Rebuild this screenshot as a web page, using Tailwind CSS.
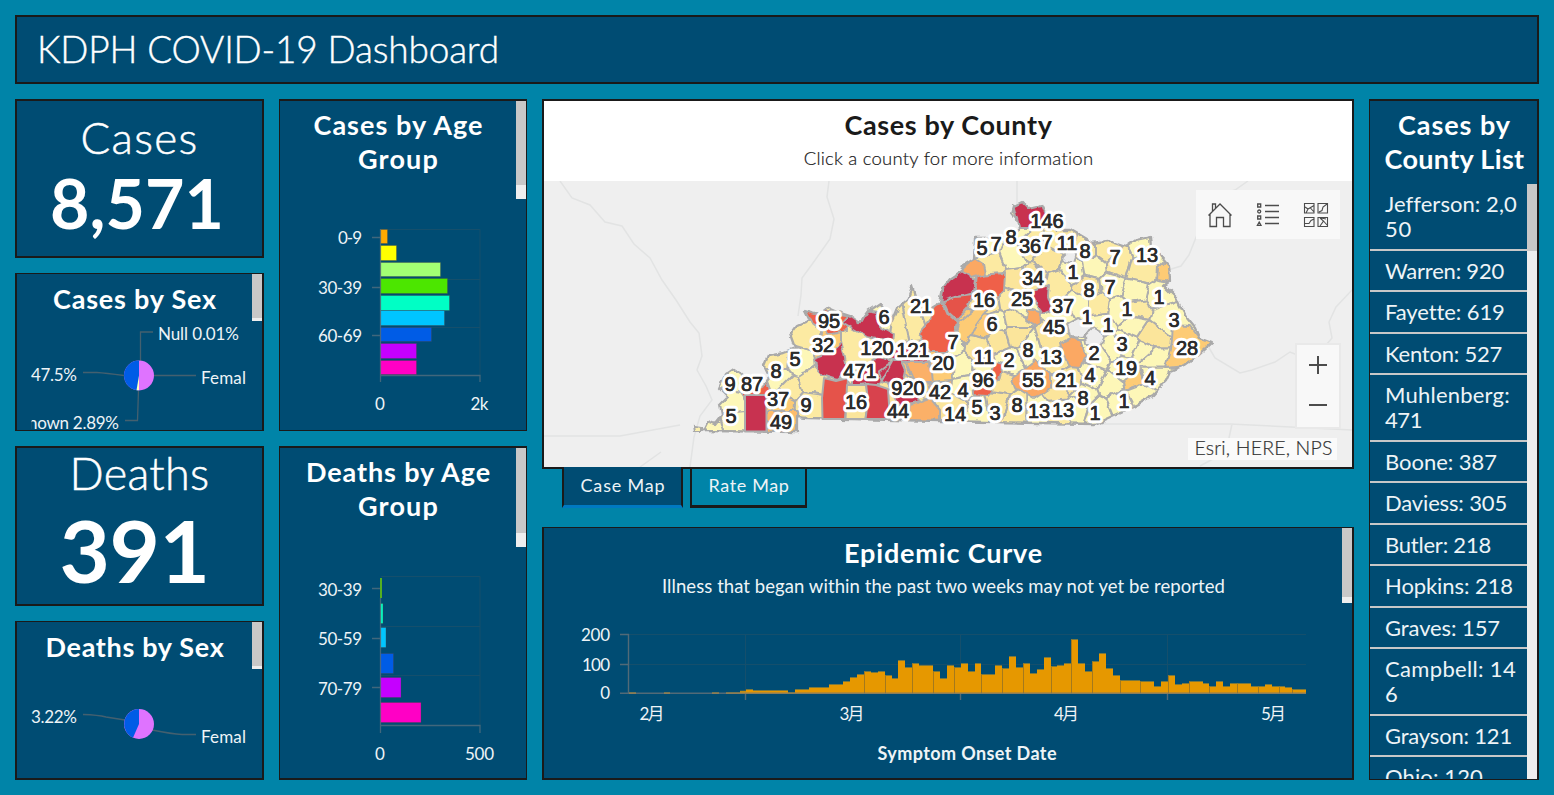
<!DOCTYPE html>
<html lang="en">
<head>
<meta charset="utf-8">
<title>KDPH COVID-19 Dashboard</title>
<script src="https://cdn.jsdelivr.net/npm/@tailwindcss/browser@4"></script>
</head>
<body class="bg-[#0084a8] text-white font-[Lato,'Noto_Sans_CJK_SC',sans-serif] overflow-hidden">
<div class="flex flex-col w-[1554px] h-[795px] p-[15px] gap-[15px]">
  <header class="h-[69px] shrink-0 bg-[#004c73] border-2 border-[#1a1a1a] flex items-center pl-[20px] pb-[3px]">
    <h1 class="text-[37px] font-light leading-none whitespace-nowrap [-webkit-text-stroke:0.4px]"><span data-w="460">KDPH COVID-19 Dashboard</span></h1>
  </header>

  <main class="flex gap-[15px] h-[681px]">
    <!-- totals and sex charts -->
    <div class="flex flex-col gap-[15px] w-[249px] shrink-0">
      <section class="h-[159px] bg-[#004c73] border-2 border-[#1a1a1a] flex flex-col items-center pt-[8px]">
        <div class="text-[44px] font-light leading-[56px] [-webkit-text-stroke:0.5px]"><span data-w="116">Cases</span></div>
        <div class="text-[68px] font-bold leading-[76px] pr-[5px]"><span data-w="172">8,571</span></div>
      </section>
      <section class="relative h-[158px] bg-[#004c73] border-x-2 border-y border-[#1a1a1a] flex flex-col overflow-hidden">
        <h2 class="h-[50px] text-[27px] font-bold leading-[50px] text-center pr-[9px]"><span data-w="162">Cases by Sex</span></h2>
        <svg class="w-[245px] h-[106px]" viewBox="17 324 245 106" font-size="17" fill="#eef4f7">
          <g fill="none" stroke="#44606f" stroke-width="1.3"><path d="M140.500 361V332H153M154 375.500H196M124 375.500Q105 373 97 372.500H83M138.500 390 137.500 420.500H125"/></g>
          <circle cx="139" cy="375.500" r="15" fill="#df73ff"/>
          <path d="M139 360.500A15 15 0 0 0 139 390.500Z" fill="#005ce6"/><path d="M139 375.500 136.500 390.300H139Z" fill="#ffffbe"/>
          <text x="158" y="340" textLength="81">Null 0.01%</text>
          <text x="31" y="381" textLength="46">47.5%</text>
          <text x="201" y="384" textLength="45">Femal</text>
          <svg x="31.500" y="410" width="100" height="20" viewBox="31.500 410 100 20"><text x="28" y="429" textLength="91">nown 2.89%</text></svg>
        </svg>
        <div class="absolute top-0 right-0 w-[10px] h-[47px] bg-[#c8c8c8] border-b-3 border-[#eee]"></div>
      </section>
      <section class="h-[160px] bg-[#004c73] border-2 border-[#1a1a1a] flex flex-col items-center">
        <div class="text-[45px] font-light leading-[51px] [-webkit-text-stroke:0.5px]"><span data-w="138">Deaths</span></div>
        <div class="text-[87px] font-bold leading-[101px] pr-[10px]"><span data-w="148">391</span></div>
      </section>
      <section class="relative h-[159px] bg-[#004c73] border-x-2 border-t border-b-2 border-[#1a1a1a] flex flex-col">
        <h2 class="h-[50px] text-[27px] font-bold leading-[50px] text-center pr-[9px]"><span data-w="177">Deaths by Sex</span></h2>
        <svg class="w-[245px] h-[106px]" viewBox="17 672 245 106" font-size="17" fill="#eef4f7">
          <path d="M83 714.500Q98 715 106 717L125 720M152 730Q172 734 182 734.500H196" fill="none" stroke="#44606f" stroke-width="1.300"/>
          <circle cx="139" cy="724" r="15" fill="#df73ff"/>
          <path d="M139 709A15 15 0 0 0 133 737.700L139 724Z" fill="#005ce6"/>
          <text x="31" y="723" textLength="46">3.22%</text>
          <text x="201" y="743" textLength="45">Femal</text>
        </svg>
        <div class="absolute top-0 right-0 w-[10px] h-[47px] bg-[#c8c8c8] border-b-3 border-[#eee]"></div>
      </section>
    </div>

    <!-- age group charts -->
    <div class="flex flex-col gap-[15px] w-[248px] shrink-0">
      <section class="relative h-[332px] bg-[#004c73] border-x border-t-2 border-b border-[#1a1a1a]">
        <h2 class="h-[80px] pt-[7px] text-[27px] font-bold leading-[34px] text-center pr-[9px]"><span data-w="168">Cases by Age</span><br><span data-w="79">Group</span></h2>
        <svg class="block w-[246px] h-[249px]" viewBox="280 181 246 249" font-size="17" fill="#eef4f7">
          <path d="M381 229.500H480V376M381 279.500H480M381 327.500H480" fill="none" stroke="#154f6c"/>
          <g stroke-opacity=".35" stroke="#444">
            <path fill="#ffaa00" d="M380.500 229.500h7v14h-7z"/><path fill="#ffff00" d="M380.500 245.500h16v15h-16z"/>
            <path fill="#a3ff73" d="M380.500 262.500h60v14h-60z"/><path fill="#4ce600" d="M380.500 278.500h67v15h-67z"/>
            <path fill="#00ffc5" d="M380.500 295.500h69v15h-69z"/><path fill="#00c5ff" d="M380.500 310.500h64v15h-64z"/>
            <path fill="#005ce6" d="M380.500 327.500h51v14h-51z"/><path fill="#c500ff" d="M380.500 343.500h36v15h-36z"/>
            <path fill="#ff00c5" d="M380.500 360.500h36v14h-36z"/>
          </g>
          <path d="M372 237.500h8M372 287.500h8M372 335.500h8M380.500 229v153M380 375.500h100V382" fill="none" stroke="#5d7480" stroke-opacity=".7" stroke-width="1.300"/>
          <g text-anchor="end"><text x="362" y="244" textLength="24">0-9</text><text x="362" y="294" textLength="44">30-39</text><text x="362" y="342" textLength="44">60-69</text></g>
          <g text-anchor="middle"><text x="380" y="410">0</text><text x="479.500" y="410" textLength="18">2k</text></g>
        </svg>
        <div class="absolute top-0 right-0 w-[10px] h-[98px] bg-[#c8c8c8] border-b-14 border-[#eee]"></div>
      </section>
      <section class="relative h-[334px] bg-[#004c73] border-x border-y-2 border-[#1a1a1a]">
        <h2 class="h-[80px] pt-[7px] text-[27px] font-bold leading-[34px] text-center pr-[9px]"><span data-w="183">Deaths by Age</span><br><span data-w="79">Group</span></h2>
        <svg class="block w-[246px] h-[249px]" viewBox="280 528 246 249" font-size="17" fill="#eef4f7">
          <path d="M381 576.500H480V726M381 626.500H480M381 675.500H480" fill="none" stroke="#154f6c"/>
          <g stroke-opacity=".35" stroke="#444">
            <path fill="#55b020" d="M380 578h2v20h-2z" stroke="none"/><path fill="#00ffc5" d="M380.500 603.500h2.500v20h-2.500z"/>
            <path fill="#00c5ff" d="M380.500 627.500h5.500v20h-5.500z"/><path fill="#005ce6" d="M380.500 653.500h13v20h-13z"/>
            <path fill="#c500ff" d="M380.500 677.500h20.500v20h-20.500z"/><path fill="#ff00c5" d="M380.500 702.500h40.500v20h-40.500z"/>
          </g>
          <path d="M372 588.500h8M372 638.500h8M372 687.500h8M380.500 598v135M380 725.500h100V733" fill="none" stroke="#5d7480" stroke-opacity=".7" stroke-width="1.300"/>
          <g text-anchor="end"><text x="362" y="596" textLength="44">30-39</text><text x="362" y="645" textLength="44">50-59</text><text x="362" y="695" textLength="44">70-79</text></g>
          <g text-anchor="middle"><text x="380" y="760">0</text><text x="479.500" y="760" textLength="29">500</text></g>
        </svg>
        <div class="absolute top-0 right-0 w-[10px] h-[99px] bg-[#c8c8c8] border-b-14 border-[#eee]"></div>
      </section>
    </div>

    <!-- map and epidemic curve -->
    <div class="flex flex-col w-[812px] shrink-0">
      <section class="relative h-[370px] bg-white border-2 border-[#1a1a1a] text-[#1a1a1a]">
        <div class="h-[80px] pt-[7px] text-center pl-px">
          <h2 class="text-[27px] font-bold leading-[34px]"><span data-w="206">Cases by County</span></h2>
          <p class="text-[18.5px] font-light leading-[33px] [-webkit-text-stroke:0.2px]"><span data-w="288">Click a county for more information</span></p>
        </div>
        <svg id="map" class="block w-[808px] h-[286px] bg-[#efefef]" viewBox="544 181 808 286">
          <defs>
            <clipPath id="state"><path id="outline" d="M703 431 708 421 715 424 722 415 720 405 728 397 719 388 725 375 734 369 741 374 750 384 763 386 770 377 764 365 768 355 784 352 795 348 790 334 796 326 810 320 805 310 820 314 829 307 838 311 850 315 860 322 868 311 880 303 884 308 893 320 898 308 907 300 912 287 916 300 930 309 940 303 943 288 950 279 962 271 964 265 974 259 975 238 1000 238 1010 240 1019 230 1017 219 1012 213 1014 206 1022 202 1028 208 1041 205 1046 216 1056 230 1070 230 1082 237 1092 243 1108 241 1126 247 1136 240 1150 237 1151 248 1160 255 1169 265 1170 280 1164 285 1176 297 1180 306 1186 317 1195 328 1199 338 1212 343 1198 356 1185 365 1170 371 1166 380 1152 396 1134 406 1108 418 1095 424 1038 423 940 421 808 418 797 417 797 432Z"/></clipPath>
            <filter id="rough" x="0" y="0" width="1" height="1" filterUnits="objectBoundingBox"><feTurbulence type="fractalNoise" baseFrequency=".1" numOctaves="2" seed="4"/><feDisplacementMap in="SourceGraphic" scale="6" xChannelSelector="R" yChannelSelector="G"/></filter>
          </defs>
          <g fill="none" stroke="#e2e3e3" stroke-width="1.500">
            <path d="M560 181 572 198 590 205 605 222 622 226 634 244 650 258 662 280 676 300 690 322 699 333 702 356 697 370 706 386 712 400 700 416 694 437 690 467M829 181 827 197 834 219 830 239 813 263 802 278 801 295 798 316M1017 181V205M1248 181 1235 190 1214 196 1204 214 1197 235 1189 255 1181 266 1168 270M1352 290 1336 307 1329 322 1332 338 1320 352 1305 358 1290 352 1275 362 1252 370 1240 373 1215 358 1208 346M1095 424H1230L1352 430M1232 424 1226 452 1200 466M797 432 694 430M544 436 620 436 680 425M640 467 661 452"/>
          </g>
          <g filter="url(#rough)">
            <rect x="544" y="181" width="808" height="286" fill="none"/>
            <g clip-path="url(#state)" stroke="#adadad" stroke-width="2" stroke-linejoin="round">
              <g id="cells"></g>
              <g>
                <path fill="#c83250" d="M1012 200H1048V228H1019Z"/>
                <path fill="#fcbc6c" d="M767 411H798V433H767Z"/>
                <path fill="#ef6149" d="M805 308 852 316 846 330 828 334 812 322Z"/>
                <path fill="#c83250" d="M814 359 830 353 841 342 845 358 847 370 838 380 822 375 815 368ZM842 323 850 314 861 322 866 310 877 312 879 326 893 334 892 342 866 337ZM852 376 880 355 892 362 880 384 866 384 852 386ZM882 344 925 340 932 360 912 364 890 358ZM878 372 900 356 906 370 902 388 882 382Z"/>
                <path fill="#c83250" d="M887 384 905 382 922 390 917 404 900 405Z"/>
                <path fill="#fbb068" d="M906 362 930 362 932 382 914 382ZM910 405 930 398 940 410 940 422H908ZM928 382 952 380 950 400H932Z"/>
                <path fill="#c83250" d="M941 303 944 284 952 278 963 270 976 281 974 293 956 298Z"/>
                <path fill="#e5534a" d="M943 301 956 297 973 295 968 308 957 320 948 312Z"/>
                <path fill="#ef6149" d="M977 275 1005 273 1004 292 996 300 975 293ZM936 303 943 303 948 314 958 323 953 338 948 352 930 352 919 334 930 320ZM972 370 990 374 996 362 1003 364 999 380 988 395 974 394Z"/>
                <path fill="#fba863" d="M960 270 974 258 983 264 985 274 972 278ZM1012 377 1022 370 1035 360 1050 374 1050 388 1034 399 1016 388ZM1061 343 1073 337 1081 343 1086 355 1081 367 1068 366Z"/>
                <path fill="#c83250" d="M1033 290 1049 284 1048 296 1052 310 1043 314 1035 303Z"/>
                <path fill="#fba863" d="M1027 309 1040 312 1041 323 1034 325 1026 319Z"/>
                <path fill="#ededed" d="M1067 324 1078 318 1092 326 1084 337 1070 336ZM1085 336 1093 328 1104 334 1101 345 1086 345ZM1062 257 1068 251 1077 254 1074 263 1066 262Z"/>
                <path fill="#fdcb75" d="M1172 325 1190 326 1199 338 1214 342 1186 366 1165 368 1170 350ZM1158 268 1168 258 1172 282 1157 280ZM960 321 976 308 988 308 974 328 966 345 956 335Z"/>
              </g>
            </g>
            <use href="#outline" fill="none" stroke="#a9a9a9" stroke-width="2.300" stroke-linejoin="round"/>
            <path d="M694 426 701 427 701 432 695 432Z" fill="#fbf0ad" stroke="#a9a9a9" stroke-width="2"/>
          </g>
          <g stroke="#adadad" stroke-width="2" stroke-linejoin="round">
            <path fill="#c83250" d="M745 395H766.500V431.500H745Z"/>
            <path fill="#e5534a" d="M824 378 836 381 848 378 847 396 845 419H822.500L822 398Z"/>
            <path fill="#fbe59b" d="M847 385H866L868 400 865.500 419H845.500Z"/>
            <path fill="#d8424d" d="M866 384 876 385 888 389 890 419H865.500L868 400Z"/>
          </g>
          <g id="labels" font-family="Liberation Sans, Arial, sans-serif" font-size="20" text-anchor="middle" stroke-linejoin="round"></g>
        </svg>
        <div class="absolute right-[12px] top-[89px] w-[144px] h-[49px] bg-[#f8f8f8] flex items-center justify-around text-[#4c4c4c]">
          <svg class="w-[26px] h-[26px]" viewBox="0 0 26 26" fill="none" stroke="currentColor" stroke-width="1.300"><path d="M3 12.500V24.500H9.500V15.500H16.500V24.500H23V12.500M1.500 13.500 13 2 24.500 13.500M5.500 9V2H8.500V6"/></svg>
          <svg class="w-[26px] h-[26px]" viewBox="0 0 26 26" fill="none" stroke="currentColor" stroke-width="1.300"><path d="M10 3.500H24M10 9.500H24M10 15.500H24M10 21.500H24"/><path d="M2.700 2H5.700V5H2.700ZM2.700 14H5.700V17H2.700ZM4.200 20 6 23.300H2.400Z"/><circle cx="4.200" cy="9.500" r="1.500"/></svg>
          <svg class="w-[26px] h-[26px]" viewBox="0 0 26 26" fill="none" stroke="currentColor" stroke-width="1.100"><path d="M1.500 1.500H11V11H1.500ZM15 1.500H24.500V11H15ZM1.500 15.500H11V24.500H1.500ZM15 15.500H24.500V24.500H15ZM2 5 5 7 11 3.500M5 7 3 11M7 5.500 11 10M16 10 19 8.500 20 5 24 2M2 21.500H6L8 18.500 11 17M17 16 20.500 19 17 24M20.500 19 24 23M18 16 23 17"/></svg>
        </div>
        <div class="absolute right-[11px] top-[242px] w-[46px] h-[86px] bg-[#f8f8f8] border-2 border-[#e9e9e9] text-[#4c4c4c] flex flex-col items-center pt-[10px] gap-[20px]">
          <svg class="w-[20px] h-[20px]" viewBox="0 0 20 20" stroke="currentColor" stroke-width="2"><path d="M1 10H19M10 1V19"/></svg>
          <svg class="w-[20px] h-[20px]" viewBox="0 0 20 20" stroke="currentColor" stroke-width="2"><path d="M1 10H19"/></svg>
        </div>
        <div class="absolute right-[15px] bottom-[7px] w-[149px] h-[22px] bg-[#fafafa] text-[#323232] text-[19.5px] leading-[20px] text-center pl-[2px] whitespace-nowrap font-light [-webkit-text-stroke:0.2px]"><span data-w="136">Esri, HERE, NPS</span></div>
      </section>

      <nav class="relative flex items-start gap-[7px] pl-[20px] h-[58px] text-[18px] leading-[36px] text-[#eef4f7]">
        <div class="-mt-[2px] w-[121px] h-[41px] bg-[#004c73] border-x-2 border-x-[#1a1a1a] border-b-3 border-b-[#0079c1] text-center pl-px"><span data-w="83">Case Map</span></div>
        <div class="-mt-[2px] w-[117px] h-[41px] border-2 border-b-3 border-[#1a1a1a] leading-[33px] text-center pl-px"><span data-w="79">Rate Map</span></div>
      </nav>

      <section class="relative h-[253px] bg-[#004c73] border-x-2 border-t border-b-2 border-[#1a1a1a]">
        <div class="h-[80px] pt-[8px] text-center pr-[9px]">
          <h2 class="text-[27px] font-bold leading-[34px]"><span data-w="197">Epidemic Curve</span></h2>
          <p class="text-[18.5px] leading-[33px] text-[#eef4f7]"><span data-w="561">Illness that began within the past two weeks may not yet be reported</span></p>
        </div>
        <svg class="block w-[808px] h-[170px]" viewBox="544 608 808 170" font-size="17" fill="#eef4f7">
          <path d="M629 634.500H1306M629 664.500H1306M745.500 634V693M960.500 634V693M1167.500 634V693" fill="none" stroke="#154f6c"/>
          <g id="bars" fill="#e69800"></g>
          <path d="M620 634.500h9M620 664.500h9M620 693.200H1306M628.500 634V693M745.500 693v7M960.500 693v7M1167.500 693v7" fill="none" stroke="#6d7478" stroke-opacity=".75" stroke-width="1.400"/>
          <g text-anchor="end"><text x="610" y="641" textLength="29">200</text><text x="610" y="671" textLength="28">100</text><text x="610" y="699">0</text></g>
          <g text-anchor="middle"><text x="652" y="720" textLength="25">2月</text><text x="852" y="720" textLength="25">3月</text><text x="1066.500" y="720" textLength="25">4月</text><text x="1273.500" y="720" textLength="25">5月</text>
          <text x="967" y="760" font-weight="700" font-size="18" textLength="179">Symptom Onset Date</text></g>
        </svg>
        <div class="absolute top-0 right-0 w-[10px] h-[75px] bg-[#c8c8c8] border-b-6 border-[#eee]"></div>
      </section>
    </div>

    <!-- county list -->
    <aside class="w-[170px] shrink-0 h-[681px] bg-[#004c73] border-l border-r-2 border-t-2 border-b border-[#1a1a1a] flex flex-col">
      <h2 class="h-[83px] shrink-0 pt-[7px] text-[27px] font-bold leading-[34px] text-center pl-[2px] whitespace-nowrap"><span data-w="111">Cases by</span><br><span data-w="138">County List</span></h2>
      <div class="flex flex-1 min-h-0 overflow-hidden">
        <ul class="flex-1 min-w-0 text-[22px] leading-[25px] text-[#eef4f7] *:pl-[15px] *:py-[7.250px] *:border-b-2 *:border-[#c8c8c8] *:whitespace-nowrap">
          <li><span data-w="129">Jefferson: 2,0</span><br><span data-w="25">50</span></li>
          <li><span data-w="117">Warren: 920</span></li>
          <li><span data-w="117">Fayette: 619</span></li>
          <li><span data-w="115">Kenton: 527</span></li>
          <li><span data-w="123">Muhlenberg:</span><br><span data-w="35">471</span></li>
          <li><span data-w="110">Boone: 387</span></li>
          <li><span data-w="120">Daviess: 305</span></li>
          <li><span data-w="104">Butler: 218</span></li>
          <li><span data-w="126">Hopkins: 218</span></li>
          <li><span data-w="113">Graves: 157</span></li>
          <li><span data-w="129">Campbell: 14</span><br>6</li>
          <li><span data-w="125">Grayson: 121</span></li>
          <li><span data-w="96">Ohio: 120</span></li>
        </ul>
        <div class="w-[10px] shrink-0 bg-[#eee]"><div class="h-[67px] bg-[#c8c8c8]"></div></div>
      </div>
    </aside>
  </main>
</div>
<script>
const NS = 'http://www.w3.org/2000/svg';
function add(parent, tag, attrs, text) {
  const e = document.createElementNS(NS, tag);
  for (const k in attrs) e.setAttribute(k, attrs[k]);
  if (text !== undefined) e.textContent = text;
  parent.appendChild(e);
}
// daily case counts, one bar per day, in chart pixels
const h = [1,0,0,0,0,1,0,0,0,0,0,0,1,0,1,1,2.5,4,3,3,3,3,3,1,4,4,6,6,6,9,9,12,16,19,22,21,22,18,15,33,26,30,28,28,
22,15,28,26,30,22,30,19,19,28,25,37,26,30,20,24,36,27,28,30,54,30,22,32,40,25,18,13,13,13,12,12,7,12,18,9,10,12,12,10,7,12,7,10,10,10,7,7,9,7,7,6,4,4];
const seams = [34,37,41,44,47,51,54,57,61,64,67,71,74,78,81,84,88,91,94,96];
const bars = document.getElementById('bars');
h.forEach((v, i) => {
  if (!v) return;
  const x = Math.round(629 + i * 6.91), x2 = Math.round(629 + (i + 1) * 6.91);
  add(bars, 'rect', {x, y: 693.5 - v, width: x2 - x, height: v + .5});
  add(bars, 'rect', {x, y: 693 - v, width: x2 - x, height: 1, fill: '#7d7a40', 'fill-opacity': .7});
  if (seams.includes(i)) add(bars, 'rect', {x: x, y: 693.5 - v, width: 1, height: v, fill: '#a4791d'});
});
// county labels: value, x, y
const L = [[146,1047,221],[5,982,248],[7,996,244],[8,1011,237],[36,1030,246],[7,1047,242],[11,1067,243],[8,1085,251],[7,1115,257],[13,1147,255],[34,1033,278],[1,1073,272],[8,1089,290],[7,1110,287],[1,1159,297],[16,984,300],[25,1022,299],[37,1063,306],[1,1127,309],[1,1087,317],[21,921,306],[6,884,317],[95,829,321],[6,992,324],[45,1054,327],[1,1108,325],[3,1174,320],[32,823,345],[120,877,348],[121,913,350],[7,953,342],[3,1122,344],[28,1187,348],[5,795,359],[8,776,371],[471,860,371],[20,943,363],[11,984,357],[2,1009,360],[8,1028,350],[13,1051,357],[2,1094,353],[19,1126,368],[9,730,384],[87,752,384],[96,983,380],[55,1033,380],[21,1066,380],[4,1090,375],[4,1150,378],[37,778,399],[9,806,405],[16,856,402],[920,908,388],[42,940,392],[4,963,390],[8,1083,398],[1,1124,401],[5,731,416],[49,781,422],[44,898,411],[14,955,414],[5,977,407],[3,995,413],[8,1017,405],[13,1039,411],[13,1063,410],[1,1095,413]];
const labels = document.getElementById('labels');
L.forEach(([t, x, y]) => {
  add(labels, 'text', {x, y: y + 7, fill: '#2b2b2b', stroke: '#fff', 'stroke-width': 6.5, 'paint-order': 'stroke', 'aria-hidden': true}, t);
});
L.forEach(([t, x, y]) => {
  add(labels, 'text', {x, y: y + 7, fill: '#2b2b2b', stroke: '#2b2b2b', 'stroke-width': .6}, t);
});
// county seeds: x, y, fill; each county is the region nearest to its seed
const P='#fdf7b8', Y='#fbe59b', G='#fceaa2', O='#fdcb75', R='#ef6149';
const S = [[735,378,P],[755,387,R],[731,403,P],[733,422,P],[712,428,P],[780,378,P],[798,362,P],[806,335,G],[782,403,O],[790,388,G],[811,382,G],[808,404,G],[830,345,O],[852,345,G],[780,360,G],[884,318,P],[909,318,G],[934,310,G],[900,320,G],
[950,345,P],[945,365,O],[962,366,P],[966,388,P],[955,409,Y],[978,407,P],[997,403,Y],[1016,408,G],[1037,408,P],[1059,408,G],[1078,406,P],[1098,412,P],[988,245,P],[992,264,G],[1012,256,P],[1030,246,G],[1049,260,Y],[1060,240,G],[1085,250,G],[1105,250,G],[1119,264,G],[1147,250,P],[1140,270,G],[1158,297,P],[1015,280,Y],[1034,278,Y],[1057,283,G],[1073,270,P],[1093,266,P],[1088,288,Y],[1112,285,P],[1135,292,P],[990,303,Y],[1008,300,G],[1020,308,P],[984,325,O],[997,322,P],[1015,318,G],[1000,340,Y],[1015,336,Y],[978,350,Y],[985,368,P],[1008,360,P],[1030,348,P],[1050,342,Y],[1057,358,Y],[1000,384,Y],[1063,314,P],[1078,306,P],[1098,306,G],[1120,309,P],[1100,322,P],[1138,310,G],[1164,317,P],[1150,335,Y],[1127,345,P],[1112,350,P],[1135,325,P],[1143,352,P],[1122,370,P],[1111,384,P],[1135,380,O],[1150,375,P],[1093,375,P],[1069,382,Y],[1083,396,P],[1120,403,P],[1140,393,P],[1100,358,P],[1150,360,P],[1058,392,Y],[1015,230,P],[895,412,Y]];
const cells = document.getElementById('cells');
S.forEach(([x, y, f], i) => {
  let poly = [[680,190],[1230,190],[1230,440],[680,440]];
  S.forEach(([a, b], j) => {
    if (i === j) return;
    const side = p => (p[0] - (x + a) / 2) * (a - x) + (p[1] - (y + b) / 2) * (b - y);
    const out = [];
    poly.forEach((p, k) => {
      const q = poly[(k + 1) % poly.length], sp = side(p), sq = side(q);
      if (sp <= 0) out.push(p);
      if (sp * sq < 0) { const t = sp / (sp - sq); out.push([p[0] + (q[0] - p[0]) * t, p[1] + (q[1] - p[1]) * t]); }
    });
    poly = out;
  });
  add(cells, 'polygon', {points: poly.map(p => p.map(n => n.toFixed(1)).join()).join(' '), fill: f});
});
// tracks each heading and row to its set width
function fit() {
  document.querySelectorAll('[data-w]').forEach(s => {
    s.style.letterSpacing = '0px';
    const w = s.getBoundingClientRect().width;
    const d = (s.dataset.w - w + 2) / s.textContent.length;
    s.style.letterSpacing = d.toFixed(3) + 'px';
  });
}
fit();
addEventListener('load', () => { fit(); requestAnimationFrame(fit); setTimeout(fit, 150); });
</script>
</body>
</html>
